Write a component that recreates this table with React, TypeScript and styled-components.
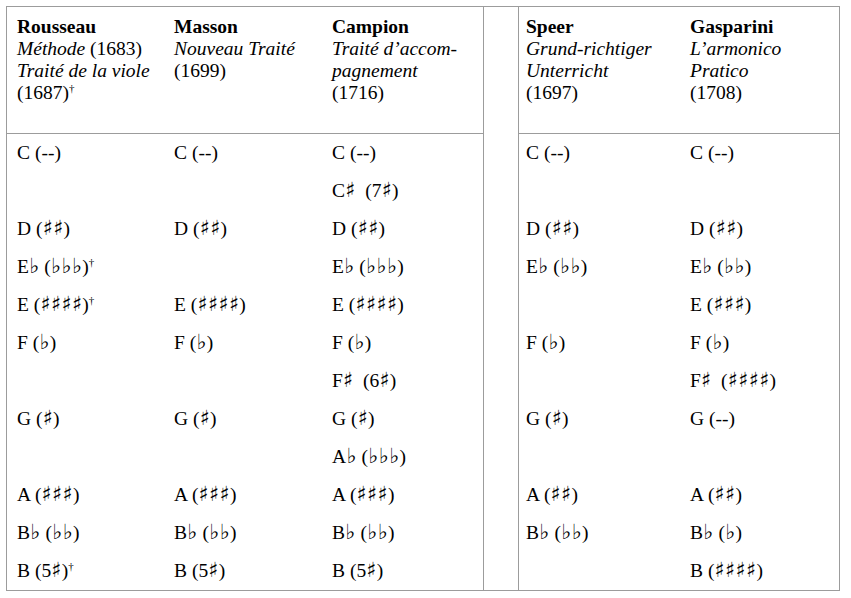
import styled, { createGlobalStyle } from "styled-components";

const GlobalStyle = createGlobalStyle`
  body {
    margin: 0;
    background: #fff;
    color: #000;
    font-family: "Liberation Serif", "Times New Roman", serif;
  }
`;

type Source = {
  author: string;
  title: string[];
  year: string;
  yearDagger?: boolean;
  firstTitleTail?: string;
  width: number;
  notes: string[];
};

// b = flat, # = sharp, ~ = dagger; "--" stays as typed
const leftSources: Source[] = [
  {
    author: "Rousseau",
    title: ["Méthode", "Traité de la viole"],
    firstTitleTail: " (1683)",
    year: "(1687)",
    yearDagger: true,
    width: 157,
    notes: [
      "C (--)",
      "",
      "D (##)",
      "Eb (bbb)~",
      "E (####)~",
      "F (b)",
      "",
      "G (#)",
      "",
      "A (###)",
      "Bb (bb)",
      "B (5#)~",
    ],
  },
  {
    author: "Masson",
    title: ["Nouveau Traité"],
    year: "(1699)",
    width: 158,
    notes: [
      "C (--)",
      "",
      "D (##)",
      "",
      "E (####)",
      "F (b)",
      "",
      "G (#)",
      "",
      "A (###)",
      "Bb (bb)",
      "B (5#)",
    ],
  },
  {
    author: "Campion",
    title: ["Traité d’accom-", "pagnement"],
    year: "(1716)",
    width: 161,
    notes: [
      "C (--)",
      "C#  (7#)",
      "D (##)",
      "Eb (bbb)",
      "E (####)",
      "F (b)",
      "F#  (6#)",
      "G (#)",
      "Ab (bbb)",
      "A (###)",
      "Bb (bb)",
      "B (5#)",
    ],
  },
];

const rightSources: Source[] = [
  {
    author: "Speer",
    title: ["Grund-richtiger", "Unterricht"],
    year: "(1697)",
    width: 164,
    notes: [
      "C (--)",
      "",
      "D (##)",
      "Eb (bb)",
      "",
      "F (b)",
      "",
      "G (#)",
      "",
      "A (##)",
      "Bb (bb)",
      "",
    ],
  },
  {
    author: "Gasparini",
    title: ["L’armonico", "Pratico"],
    year: "(1708)",
    width: 156,
    notes: [
      "C (--)",
      "",
      "D (##)",
      "Eb (bb)",
      "E (###)",
      "F (b)",
      "F#  (####)",
      "G (--)",
      "",
      "A (##)",
      "Bb (b)",
      "B (####)",
    ],
  },
];

function NoteText({ text }: { text: string }) {
  return (
    <NoteLabel>
      {text.split("").map((ch, i) => {
        if (ch === "b") return <Accidental key={i}>{"\u266D"}</Accidental>;
        if (ch === "#") return <Accidental key={i}>{"\u266F"}</Accidental>;
        if (ch === "~") return <Dagger key={i}>†</Dagger>;
        return ch;
      })}
    </NoteLabel>
  );
}

function SourceGroup({ sources, pad }: { sources: Source[]; pad: number }) {
  const cols = sources.map((s) => `${s.width}px`).join(" ");
  return (
    <Group>
      <HeaderRow $cols={cols}>
        {sources.map((s) => (
          <HeaderCell key={s.author} $pad={pad}>
            <Author>{s.author}</Author>
            {s.title.map((t, i) => (
              <Line key={t}>
                <em>{t}</em>
                {i === 0 && s.firstTitleTail}
              </Line>
            ))}
            <Line>
              {s.year}
              {s.yearDagger && <Dagger>†</Dagger>}
            </Line>
          </HeaderCell>
        ))}
      </HeaderRow>
      <Body $cols={cols}>
        {sources.map((s) => (
          <Column key={s.author}>
            {s.notes.map((n, i) => (
              <NoteCell key={i} $pad={pad}>
                {n && <NoteText text={n} />}
              </NoteCell>
            ))}
          </Column>
        ))}
      </Body>
    </Group>
  );
}

export default function App() {
  return (
    <>
      <GlobalStyle />
      <Page>
        <Frame>
          <SourceGroup sources={leftSources} pad={10} />
          <Gap />
          <SourceGroup sources={rightSources} pad={7} />
        </Frame>
      </Page>
    </>
  );
}

const Page = styled.div`
  padding: 6px 0 0 6px;
`;

const Frame = styled.div`
  display: flex;
  width: max-content;
  border: 1px solid #9c9c9c;
  font-size: 19.5px;
`;

const Group = styled.div`
  display: flex;
  flex-direction: column;
`;

const HeaderRow = styled.div<{ $cols: string }>`
  display: grid;
  grid-template-columns: ${(p) => p.$cols};
  height: 126px;
  border-bottom: 1px solid #9c9c9c;
`;

const HeaderCell = styled.div<{ $pad: number }>`
  padding: 9px 0 0 ${(p) => p.$pad}px;
  line-height: 22px;
`;

const Author = styled.div`
  font-weight: bold;
`;

const Line = styled.div`
  white-space: nowrap;
`;

const Dagger = styled.sup`
  font-size: 11px;
  vertical-align: 7px;
  line-height: 0;
`;

const Accidental = styled.span`
  font-family: "DejaVu Serif", "DejaVu Sans", serif;
  font-size: 21px;
  line-height: 1;
  display: inline-block;
  width: 10.5px;
  text-align: center;
`;

const Body = styled.div<{ $cols: string }>`
  display: grid;
  grid-template-columns: ${(p) => p.$cols};
`;

const Column = styled.div`
  display: flex;
  flex-direction: column;
`;

const NoteCell = styled.div<{ $pad: number }>`
  height: 38px;
  display: flex;
  align-items: center;
  padding-left: ${(p) => p.$pad}px;
`;

const NoteLabel = styled.span`
  white-space: pre;
`;

const Gap = styled.div`
  width: 34px;
  border-left: 1px solid #9c9c9c;
  border-right: 1px solid #9c9c9c;
`;
